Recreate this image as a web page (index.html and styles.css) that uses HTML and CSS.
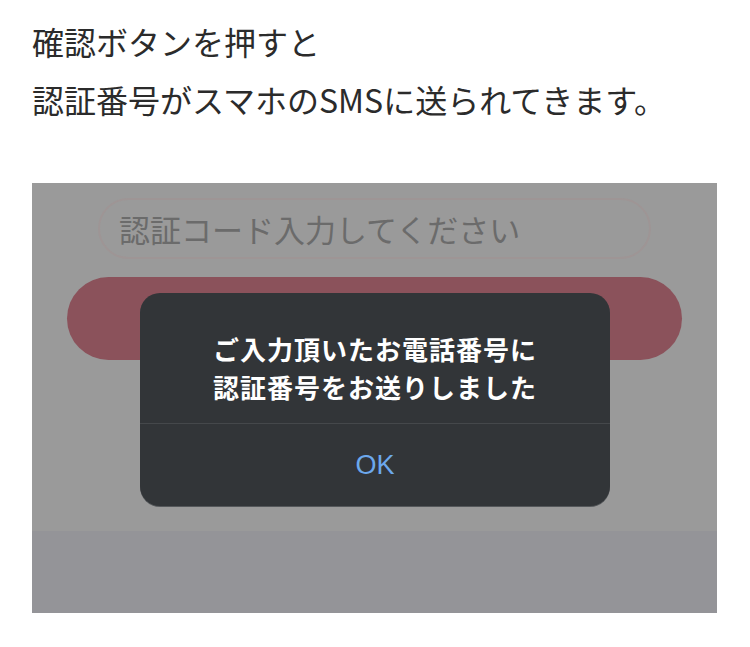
FILE: index.html
```html
<!DOCTYPE html>
<html lang="ja">
<head>
    <meta charset="UTF-8">
    <meta name="viewport" content="width=device-width, initial-scale=1.0">
    <title>認証番号の送信</title>
    <link rel="stylesheet" href="styles.css">
</head>
<body>
    <div class="article">
        <p class="lead">確認ボタンを押すと<br>認証番号がスマホのSMSに送られてきます。</p>

        <div class="screenshot">
            <div class="screen-top">
                <div class="code-input">認証コード入力してください</div>
                <div class="confirm-btn"></div>
            </div>
            <div class="screen-bottom"></div>

            <div class="alert">
                <div class="alert-message">ご入力頂いたお電話番号に<br>認証番号をお送りしました</div>
                <div class="alert-action">OK</div>
            </div>
        </div>
    </div>
</body>
</html>
```

FILE: styles.css
```css
body {
    margin: 0;
    background: #ffffff;
    font-family: "Noto Sans CJK JP", "Noto Sans", sans-serif;
    color: #333;
}
.article {
    width: 750px;
    padding-top: 12px;
}
.lead {
    margin: 0 0 55px 32px;
    font-size: 32px;
    line-height: 58px;
    color: #2b2b2b;
}
.screenshot {
    position: relative;
    margin-left: 32px;
    width: 685px;
    height: 430px;
    display: flex;
    flex-direction: column;
}
.screen-top {
    height: 348px;
    background: #9a9a9a;
    padding-top: 15px;
    box-sizing: border-box;
}
.screen-bottom {
    flex: 1;
    background: #949498;
}
.code-input {
    margin-left: 66px;
    width: 553px;
    height: 61px;
    box-sizing: border-box;
    border: 2px solid #9e9595;
    border-radius: 31px;
    padding-left: 19px;
    font-size: 31px;
    line-height: 57px;
    color: #6b6b6b;
}
.confirm-btn {
    margin: 18px 0 0 35px;
    width: 615px;
    height: 83px;
    border-radius: 42px;
    background: #8b525b;
}
.alert {
    position: absolute;
    left: 108px;
    top: 110px;
    width: 470px;
    height: 213px;
    border-radius: 20px;
    background: #323538;
    box-shadow: 0 1px 0 #55585b;
    display: flex;
    flex-direction: column;
    overflow: hidden;
}
.alert-message {
    padding: 37px 0 17px;
    height: 131px;
    box-sizing: border-box;
    text-align: center;
    font-size: 26px;
    letter-spacing: 1px;
    font-weight: bold;
    line-height: 38px;
    color: #ffffff;
    border-bottom: 1px solid #45484b;
}
.alert-action {
    flex: 1;
    display: flex;
    align-items: center;
    justify-content: center;
    font-family: "Liberation Sans", Arial, sans-serif;
    font-size: 27px;
    color: #6ca8ec;
}
```
